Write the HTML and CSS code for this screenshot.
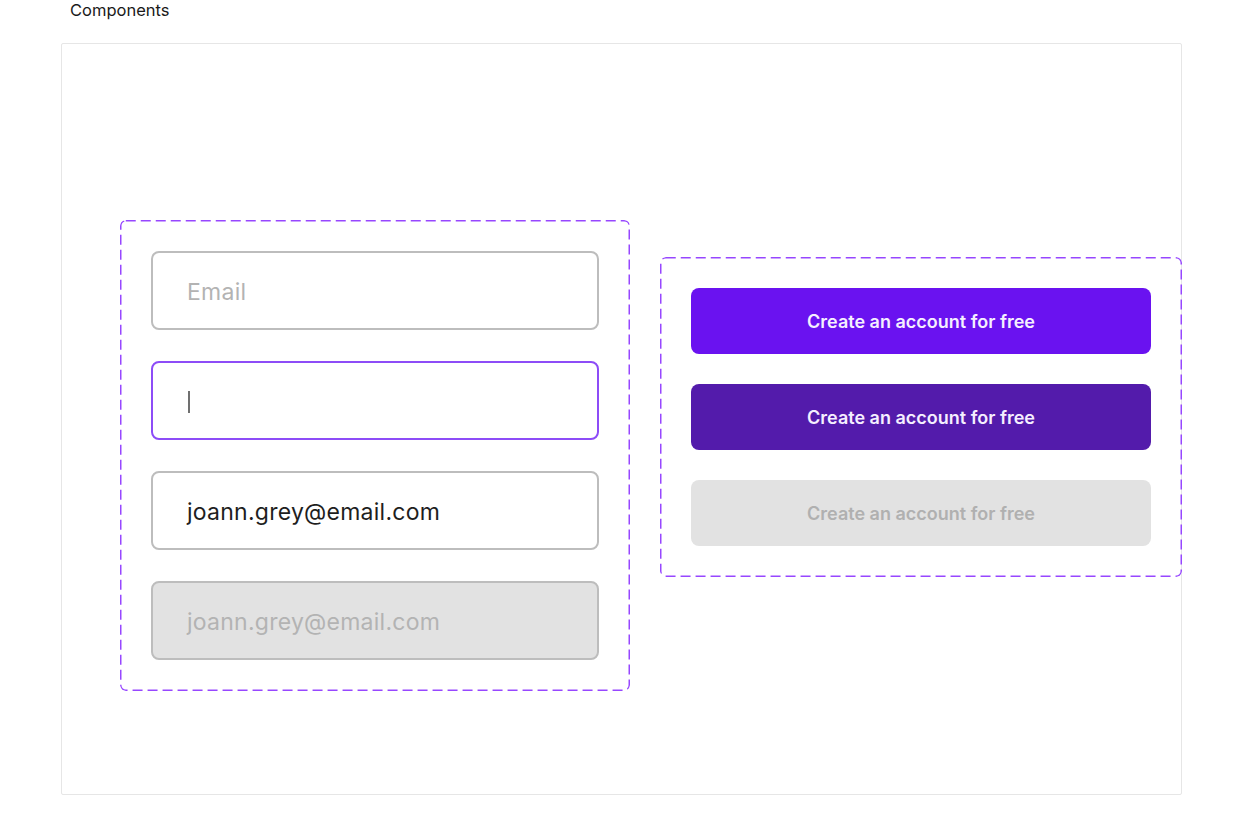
FILE: index.html
```html
<!DOCTYPE html>
<html lang="en">
<head>
<meta charset="utf-8">
<title>Components</title>
<link rel="stylesheet" href="styles.css">
</head>
<body>
<div class="page-title">Components</div>
<div class="frame">
  <div class="set set-inputs">
    <div class="field">Email</div>
    <div class="field field-focus"><span class="caret"></span></div>
    <div class="field field-filled">joann.grey@email.com</div>
    <div class="field field-disabled">joann.grey@email.com</div>
  </div>
  <div class="set set-buttons">
    <div class="btn btn-primary">Create an account for free</div>
    <div class="btn btn-pressed">Create an account for free</div>
    <div class="btn btn-disabled">Create an account for free</div>
  </div>
</div>
</body>
</html>
```

FILE: styles.css
```css
html, body {
  margin: 0;
  padding: 0;
  background: #ffffff;
}
body {
  font-family: Inter, "Liberation Sans", sans-serif;
  width: 1242px;
  height: 839px;
  overflow: hidden;
}
.page-title {
  font-family: Inter, sans-serif;
  font-size: 16.5px;
  color: #1a1a1a;
  padding: 0 0 0 70px;
  height: 43px;
  line-height: 20px;
  box-sizing: border-box;
}
.frame {
  margin-left: 61px;
  width: 1121px;
  height: 752px;
  box-sizing: border-box;
  border: 1px solid #e6e6e6;
  border-radius: 2px;
  padding: 176px 0 0 58px;
  display: flex;
  align-items: flex-start;
  gap: 30px;
}
.set {
  box-sizing: border-box;
  padding: 31px;
  display: flex;
  flex-direction: column;
  border-radius: 6px;
  background-image: url("data:image/svg+xml,%3Csvg xmlns='http://www.w3.org/2000/svg' width='100%25' height='100%25'%3E%3Crect x='0.75' y='0.75' width='calc(100%25 - 1.5px)' height='calc(100%25 - 1.5px)' rx='5' ry='5' fill='none' stroke='%239747FF' stroke-width='1.5' stroke-dasharray='10 5'/%3E%3C/svg%3E");
  flex-shrink: 0;
}
.set-inputs {
  width: 510px;
  gap: 31px;
}
.set-buttons {
  width: 522px;
  gap: 30px;
  margin-top: 37px;
}
.field {
  box-sizing: border-box;
  height: 79px;
  border: 2px solid #bdbdbd;
  border-radius: 8px;
  padding: 2px 0 0 34px;
  display: flex;
  align-items: center;
  font-family: Inter, sans-serif;
  font-size: 23px;
  color: #b3b3b3;
  letter-spacing: 0.25px;
}
.field-focus {
  border-color: #8d4cf7;
}
.caret {
  display: block;
  width: 2px;
  height: 22px;
  margin-left: 1px;
  background: #707070;
}
.field-filled {
  color: #1e1e1e;
}
.field-disabled {
  background: #e2e2e2;
  color: #b3b3b3;
}
.btn {
  box-sizing: border-box;
  height: 66px;
  border-radius: 8px;
  display: flex;
  align-items: center;
  justify-content: center;
  font-family: Inter, sans-serif;
  font-weight: 600;
  font-size: 18px;
  color: #f5efff;
}
.btn-primary {
  background: #6a12f0;
}
.btn-pressed {
  background: #531bab;
}
.btn-disabled {
  background: #e2e2e2;
  color: #b0b0b0;
}
```
